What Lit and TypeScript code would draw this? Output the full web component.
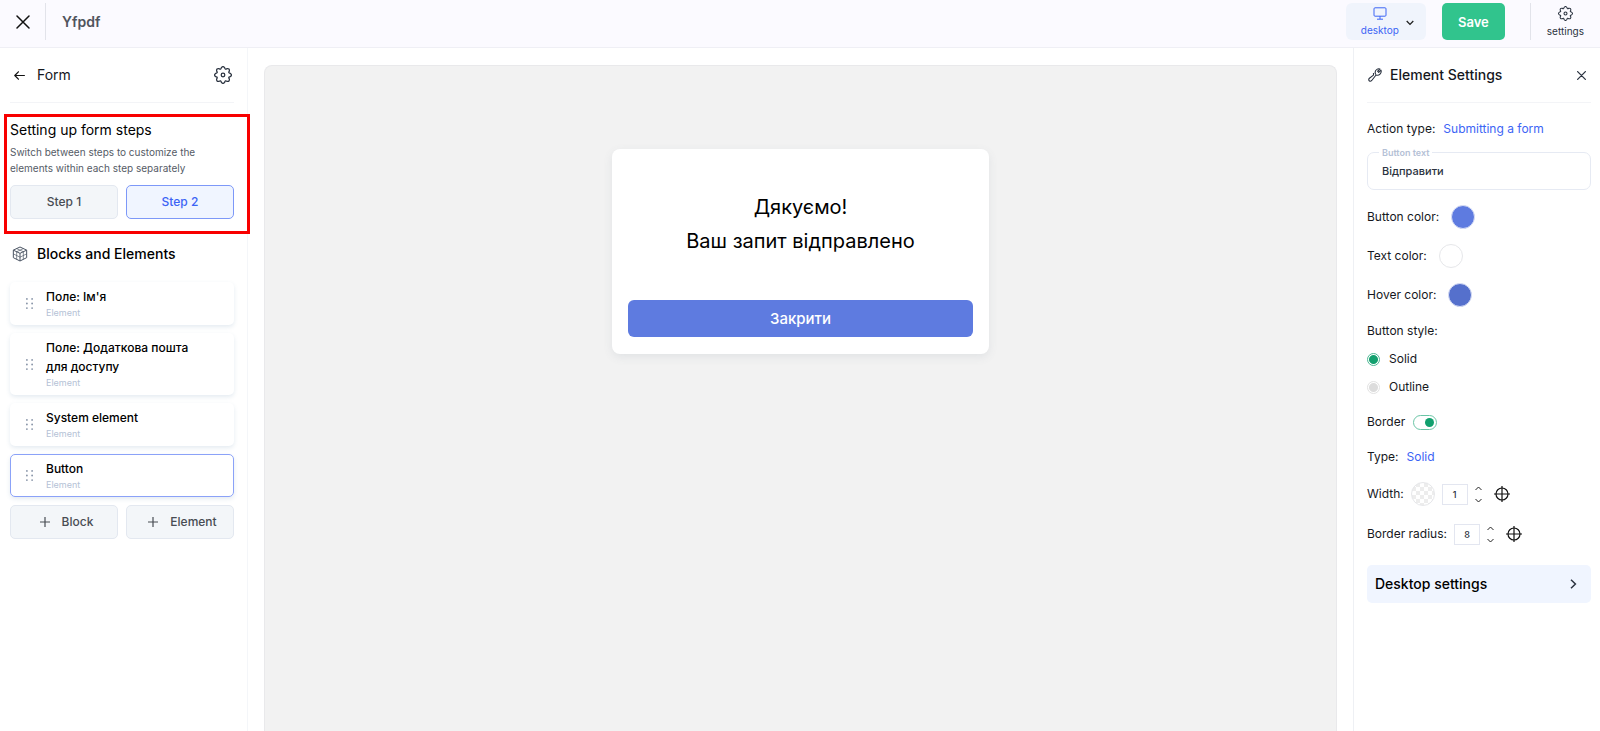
import { LitElement, html, css, svg } from "lit";
import { customElement, state } from "lit/decorators.js";
import { classMap } from "lit/directives/class-map.js";

const gearPath = (() => {
  const n = 8;
  const half = Math.PI / n;
  const at = (a: number, r: number) =>
    `${(12 + r * Math.sin(a)).toFixed(2)} ${(12 - r * Math.cos(a)).toFixed(2)}`;
  let d = `M${at(-half * 0.6, 9.9)}`;
  for (let i = 0; i < n; i++) {
    const mid = i * 2 * half;
    d += `Q${at(mid, 12.8)} ${at(mid + half * 0.6, 9.9)}`;
    d += `Q${at(mid + half, 7)} ${at(mid + half * 1.4, 9.9)}`;
  }
  return d + "Z";
})();

const gear = (size: number) => html`<svg width=${size} height=${size} viewBox="0 0 24 24" fill="none"
  stroke="currentColor" stroke-width="1.7" stroke-linejoin="round" aria-hidden="true">
  <path d=${gearPath}></path><circle cx="12" cy="12" r="2.4"></circle></svg>`;

const cross = (size: number, stroke: number) => html`<svg width=${size} height=${size} viewBox="0 0 14 14" fill="none"
  stroke="currentColor" stroke-width=${stroke} stroke-linecap="round" aria-hidden="true">
  <path d="M1 1L13 13M13 1L1 13"></path></svg>`;

const plus = html`<svg width="10" height="10" viewBox="0 0 10 10" fill="none" stroke="currentColor"
  stroke-width="1.2" aria-hidden="true"><path d="M5 0V10M0 5H10"></path></svg>`;

const target = html`<svg width="16" height="16" viewBox="0 0 16 16" fill="none" stroke="currentColor"
  stroke-width="1.2" aria-hidden="true"><circle cx="8" cy="8" r="6"></circle><path d="M8 0V16M0 8H16"></path></svg>`;

const cube = html`<svg width="16" height="16" viewBox="0 0 24 24" fill="none" stroke="currentColor"
  stroke-width="1.5" stroke-linejoin="round" aria-hidden="true">
  <path d="M12 1.5L22 6.2V17.5L12 22.5L2 17.5V6.2Z"></path>
  <path d="M2 6.2L12 11L22 6.2M12 11V22.5"></path>
  <path stroke-width="1" d="M7 3.9L17 8.6V20M17 3.9L7 8.6V20M2 11.8L12 16.8L22 11.8"></path></svg>`;

@customElement("app-root")
export class AppRoot extends LitElement {
  @state() private step = 2;
  @state() private selected = 3;
  @state() private borderWidth = 1;
  @state() private radius = 8;

  private items = ["Поле: Ім'я", "Поле: Додаткова пошта для доступу", "System element", "Button"];

  static styles = css`
    :host {
      display: flex;
      flex-direction: column;
      height: 100vh;
      overflow: hidden;
      background: #fff;
      color: #16181d;
      font: 12px/18px Inter, "Liberation Sans", sans-serif;
    }
    *, *::before, *::after { box-sizing: border-box; }
    svg { display: block; flex: none; }
    h1, h2, p, ul, fieldset { margin: 0; padding: 0; border: 0; }
    h1, h2 { font-weight: 500; font-size: 14px; line-height: 20px; }
    button, input, select { font: inherit; color: inherit; margin: 0; padding: 0; border: 0; background: none; }
    button, select { cursor: pointer; }
    .topbar {
      display: flex;
      align-items: center;
      flex: none;
      padding: 3px 16px 7px;
      background: #fbfaff;
      border-bottom: 1px solid #efeff5;
      color: #2b3340;
    }
    .close { color: #111; }
    .divider { width: 1px; height: 37px; background: #e2e3ea; margin: 0 16px 0 15px; }
    .title { flex: 1; color: #50545c; font-weight: 600; }
    .device {
      display: grid;
      grid-template-columns: auto auto;
      align-content: center;
      align-items: center;
      row-gap: 2px;
      width: 80px;
      height: 37px;
      padding: 2px 12px 0 15px;
      border-radius: 6px;
      background: #f0f4fc;
      justify-content: space-between;
    }
    .device .screen { justify-self: center; color: #3c64f5; }
    .device .chevron { grid-row: 1 / 3; grid-column: 2; }
    .device select { grid-row: 2; color: #3c64f5; font-size: 10px; line-height: 16px; }
    select { appearance: none; field-sizing: content; }
    .save {
      width: 63px;
      height: 37px;
      margin-left: 16px;
      border-radius: 5px;
      background: #31c48d;
      color: #fff;
      font-size: 13px;
      font-weight: 600;
    }
    .topbar .save + .divider { margin: 0 16px 0 25px; }
    .settings { display: grid; justify-items: center; gap: 2px; padding-top: 1px; font-size: 10px; line-height: 16px; }
    .body { display: flex; flex: 1; min-height: 0; }
    .panel { flex: none; width: 248px; }
    .left { padding: 0 13px 0 10px; border-right: 1px solid #f4f6f9; }
    .right { width: 247px; padding: 0 9px 0 13px; border-left: 1px solid #eef0f4; }
    .head {
      display: flex;
      align-items: center;
      height: 55px;
      gap: 10px;
      border-bottom: 1px solid #f3f4f7;
      color: #2b3340;
    }
    .head h2 { flex: 1; color: #16181d; }
    .left .head { padding: 0 2px 0 4px; gap: 12px; }
    .left .head h2 { font-weight: 400; }
    .right .head { padding: 0 5px 0 1px; gap: 8px; }
    .steps {
      margin: 11px -16px 0 -6px;
      padding: 3px 13px 12px 3px;
      border: 3px solid #f80000;
      position: relative;
    }
    .steps h2 { font-weight: 400; color: #000; }
    .steps p { margin: 4px 0 9px; font-size: 10px; line-height: 16px; color: #555b66; }
    .pair { display: grid; grid-template-columns: 1fr 1fr; gap: 8px; }
    .soft {
      display: flex;
      align-items: center;
      justify-content: center;
      gap: 12px;
      height: 34px;
      border: 1px solid #e3e8f0;
      border-radius: 5px;
      background: #f3f6f9;
      color: #484c53;
      font-weight: 500;
    }
    .soft.on { border-color: #7d98f8; background: #f0f5ff; color: #3c64f5; }
    .add { padding-left: 5px; }
    .blocks-title { display: flex; align-items: center; gap: 9px; padding: 10px 0 18px 2px; color: #4a5463; }
    .blocks-title h2 { color: #000; }
    .list { display: grid; gap: 8px; list-style: none; margin-bottom: 8px; }
    .card {
      display: flex;
      align-items: center;
      gap: 13px;
      width: 100%;
      padding: 4px 40px 4px 15px;
      border: 1px solid transparent;
      border-radius: 5px;
      text-align: left;
      box-shadow: 0 2px 4px rgba(90, 130, 170, 0.16);
    }
    .card.on { border-color: #8ba2f8; }
    .name { display: block; font-weight: 500; line-height: 19px; color: #000; }
    .kind { display: block; font-size: 9px; line-height: 14px; color: #b5c2d6; }
    .grip { color: #8592a6; }
    .stage { flex: 1; min-width: 0; padding: 17px 16px 0; }
    .canvas {
      height: 100%;
      padding: 83px 16px 0;
      border: 1px solid #e9e9eb;
      border-bottom: 0;
      border-radius: 8px 8px 0 0;
      background: #f2f2f2;
    }
    .dialog {
      max-width: 377px;
      margin: 0 auto;
      padding: 41px 16px 17px;
      border-radius: 8px;
      background: #fff;
      box-shadow: 0 3px 10px rgba(80, 100, 120, 0.1);
      text-align: center;
      color: #000;
    }
    .dialog p { font-size: 20px; line-height: 34px; }
    .dialog button {
      width: 100%;
      height: 37px;
      margin-top: 42px;
      border-radius: 6px;
      background: #5e7be0;
      color: #fff;
      font-size: 15px;
      font-weight: 500;
    }
    .row { display: flex; align-items: center; gap: 8px; }
    .link { color: #3c64f5; }
    .action { padding: 17px 0 8px; }
    .field { border: 1px solid #e6eaf3; border-radius: 7px; padding: 0 14px; height: 44px; min-width: 0; }
    .field legend { padding: 2px 0 0; margin-left: -3px; font-size: 9px; font-weight: 600; line-height: 10px; color: #b5c1d6; }
    .field legend label { display: block; padding: 0 3px; }
    .field input { display: block; width: 100%; height: 26px; font-size: 11px; font-weight: 500; color: #2b3340; }
    .colors { display: grid; gap: 15px; padding: 15px 0; }
    .colors .row { gap: 12px; }
    .swatch { width: 24px; height: 24px; border-radius: 50%; border: 1px solid #e6e7ea; }
    .main-color { background: #5e7be0; border-color: #d8def5; }
    .hover-color { background: #5570cc; border-color: #d8def5; }
    .clear { background: repeating-conic-gradient(#ededed 0 25%, #fff 0 50%) 0 0 / 8px 8px; }
    .radio { gap: 9px; margin-top: 10px; }
    input[type="radio"] {
      appearance: none;
      width: 13px;
      height: 13px;
      border: 1px solid #e2e2e2;
      border-radius: 50%;
      background: radial-gradient(circle, #dcdcdc 4px, #fff 5px);
    }
    input[type="radio"]:checked { background: radial-gradient(circle, #12a06e 4px, #fff 5px); border-color: #4db894; }
    .border-row { margin-top: 17px; }
    .toggle {
      appearance: none;
      width: 24px;
      height: 15px;
      border: 1px solid #6bc5a6;
      border-radius: 8px;
      display: flex;
      align-items: center;
      padding: 2px;
    }
    .toggle::before { content: ""; width: 9px; height: 9px; border-radius: 50%; background: #cfd4da; }
    .toggle:checked::before { margin-left: auto; background: #12a06e; }
    .type { margin: 17px 0 16px; }
    .number {
      appearance: textfield;
      width: 26px;
      height: 21px;
      border: 1px solid #e3e6f0;
      text-align: center;
      font-size: 9px;
      font-weight: 500;
      color: #2b3340;
    }
    .number::-webkit-inner-spin-button { display: none; }
    .size { min-height: 24px; gap: 7px; }
    .size + .size { margin-top: 16px; }
    .arrows { display: grid; gap: 7px; }
    .arrows button { display: block; width: 7px; height: 5px; }
    .reset { margin-left: 5px; color: #111; }
    .more {
      display: flex;
      align-items: center;
      justify-content: space-between;
      width: 100%;
      height: 38px;
      margin-top: 19px;
      padding: 0 14px 0 8px;
      border-radius: 5px;
      background: #f0f5ff;
      color: #000;
      font-size: 14px;
      font-weight: 500;
    }
  `;

  private stepper(id: string, value: number, set: (v: number) => void) {
    return html`
      <input class="number" id=${id} type="number" .value=${String(value)}
        @input=${(e: Event) => set(Number((e.target as HTMLInputElement).value))} />
      <span class="arrows">
        <button aria-label="Increase" @click=${() => set(value + 1)}>
          <svg width="7" height="5" viewBox="0 0 7 5" fill="none" stroke="#222"><path d="M0.5 4L3.5 1L6.5 4"></path></svg>
        </button>
        <button aria-label="Decrease" @click=${() => set(Math.max(0, value - 1))}>
          <svg width="7" height="5" viewBox="0 0 7 5" fill="none" stroke="#222"><path d="M0.5 1L3.5 4L6.5 1"></path></svg>
        </button>
      </span>
      <button class="reset" aria-label="Reset">${target}</button>`;
  }

  private grip() {
    return html`<svg class="grip" width="7" height="11" viewBox="0 0 7 11" fill="currentColor" aria-hidden="true">
      ${[0.9, 5.5, 10.1].map((y) => svg`<circle cx="0.9" cy=${y} r="0.9"></circle><circle cx="6.1" cy=${y} r="0.9"></circle>`)}
    </svg>`;
  }

  render() {
    return html`
      <header class="topbar">
        <button class="close" aria-label="Close">${cross(14, 1.5)}</button>
        <span class="divider"></span>
        <h1 class="title">Yfpdf</h1>
        <label class="device">
          <svg class="screen" width="14" height="13" viewBox="0 0 14 13" fill="none" stroke="currentColor" aria-hidden="true">
            <rect x="1" y="0.8" width="12" height="8.4" rx="1"></rect><path d="M7 9.2V12M4 12.2H10"></path>
          </svg>
          <select aria-label="Device"><option>desktop</option></select>
          <svg class="chevron" width="8" height="6" viewBox="0 0 8 6" fill="none" stroke="#222" stroke-width="1.3">
            <path d="M0.7 1L4 4.4L7.3 1"></path>
          </svg>
        </label>
        <button class="save">Save</button>
        <span class="divider"></span>
        <button class="settings">${gear(15)}<span>settings</span></button>
      </header>
      <div class="body">
        <aside class="panel left">
          <div class="head">
            <button aria-label="Back">
              <svg width="11" height="9" viewBox="0 0 11 9" fill="none" stroke="#111" stroke-width="1.2" stroke-linecap="round" stroke-linejoin="round">
                <path d="M10.4 4.5H0.8M4.4 0.8L0.8 4.5L4.4 8.2"></path>
              </svg>
            </button>
            <h2>Form</h2>
            <button aria-label="Form settings">${gear(18)}</button>
          </div>
          <section class="steps">
            <h2>Setting up form steps</h2>
            <p>Switch between steps to customize the elements within each step separately</p>
            <div class="pair">
              ${[1, 2].map((n) => html`<button class=${classMap({ soft: true, on: this.step === n })}
                @click=${() => (this.step = n)}>Step ${n}</button>`)}
            </div>
          </section>
          <div class="blocks-title">${cube}<h2>Blocks and Elements</h2></div>
          <ul class="list">
            ${this.items.map((name, i) => html`<li>
              <button class=${classMap({ card: true, on: this.selected === i })} @click=${() => (this.selected = i)}>
                ${this.grip()}<span><span class="name">${name}</span><span class="kind">Element</span></span>
              </button></li>`)}
          </ul>
          <div class="pair">
            <button class="soft add">${plus}Block</button>
            <button class="soft add">${plus}Element</button>
          </div>
        </aside>
        <main class="stage">
          <div class="canvas">
            <div class="dialog">
              <p>Дякуємо!</p>
              <p>Ваш запит відправлено</p>
              <button>Закрити</button>
            </div>
          </div>
        </main>
        <aside class="panel right">
          <div class="head">
            <svg width="14" height="14" viewBox="0 0 24 24" fill="none" stroke="currentColor" stroke-width="1.9" stroke-linejoin="round" aria-hidden="true">
              <path d="M13.2 11.2C11.6 7.6 12.6 4 15.2 2.4C16.8 1.3 18.8 1.2 20.4 1.8L16.6 5.6L18.4 7.4L22.2 3.6C23 6 22.4 8.8 20.6 10.6C18.8 12.4 16 12.8 13.8 12L6.4 21.4C5.2 22.8 3.4 23 2.1 21.9C0.9 20.7 1 18.8 2.4 17.6L9.4 12.2V8.6"></path>
            </svg>
            <h2>Element Settings</h2>
            <button aria-label="Close settings">${cross(9, 2)}</button>
          </div>
          <div class="row action"><span>Action type:</span><button class="link">Submitting a form</button></div>
          <fieldset class="field">
            <legend><label for="text">Button text</label></legend>
            <input id="text" type="text" value="Відправити" />
          </fieldset>
          <div class="colors">
            <div class="row"><span>Button color:</span><button class="swatch main-color" aria-label="Button color"></button></div>
            <div class="row"><span>Text color:</span><button class="swatch" aria-label="Text color"></button></div>
            <div class="row"><span>Hover color:</span><button class="swatch hover-color" aria-label="Hover color"></button></div>
          </div>
          <div>Button style:</div>
          <label class="row radio"><input type="radio" name="style" checked />Solid</label>
          <label class="row radio"><input type="radio" name="style" />Outline</label>
          <label class="row border-row">Border<input class="toggle" type="checkbox" role="switch" checked /></label>
          <div class="row type"><label for="type">Type:</label><select class="link" id="type"><option>Solid</option></select></div>
          <div class="row size"><label for="width">Width:</label><button class="swatch clear" aria-label="Border color"></button>
            ${this.stepper("width", this.borderWidth, (v) => (this.borderWidth = v))}</div>
          <div class="row size"><label for="radius">Border radius:</label>
            ${this.stepper("radius", this.radius, (v) => (this.radius = v))}</div>
          <button class="more">Desktop settings
            <svg width="7" height="10" viewBox="0 0 7 10" fill="none" stroke="#2b3340" stroke-width="1.5"><path d="M1 0.8L5.4 5L1 9.2"></path></svg>
          </button>
        </aside>
      </div>
    `;
  }
}
